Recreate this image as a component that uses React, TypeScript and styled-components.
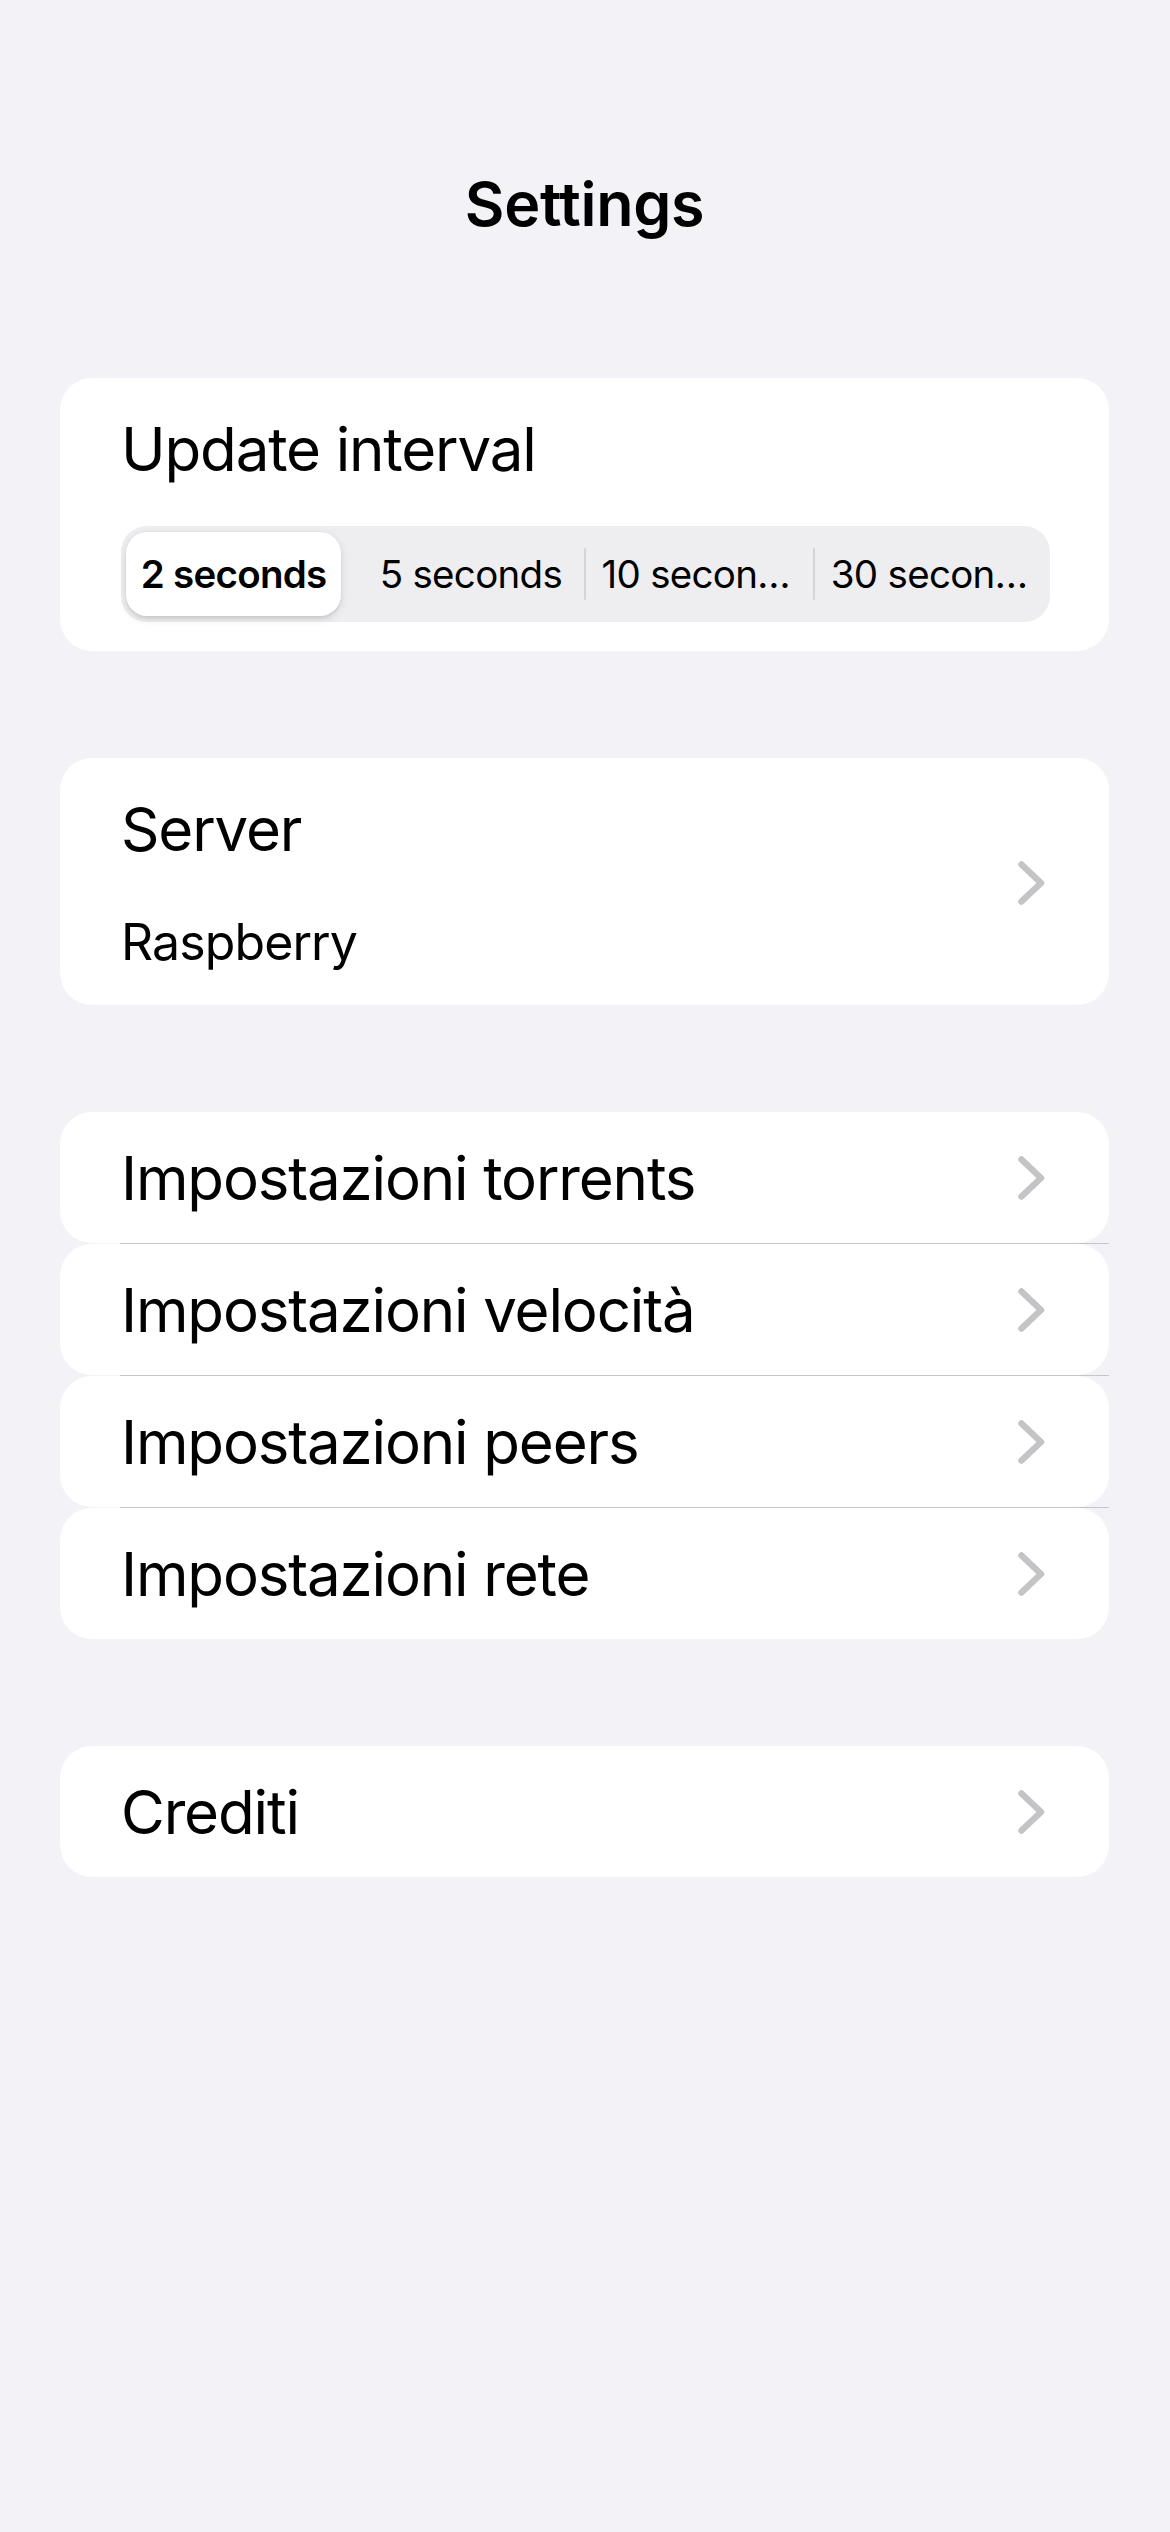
import React from "react";
import styled, { createGlobalStyle } from "styled-components";

const GlobalStyle = createGlobalStyle`
  html, body {
    margin: 0;
    padding: 0;
    background: #f2f2f7;
  }
  body {
    font-family: Inter, "Noto Sans", "Liberation Sans", sans-serif;
    color: #000;
    -webkit-font-smoothing: antialiased;
  }
  * { box-sizing: border-box; }
`;

const Page = styled.div`
  min-height: 2532px;
  background: #f2f2f7;
  padding: 167px 61px 0 60px;
  display: flex;
  flex-direction: column;
`;

const Title = styled.h1`
  margin: 0 0 137px;
  font-size: 61px;
  line-height: 74px;
  font-weight: 600;
  text-align: center;
  letter-spacing: -0.3px;
`;

const Sections = styled.div`
  display: flex;
  flex-direction: column;
  gap: 107px;
`;

const Card = styled.section`
  background: #fff;
  border-radius: 32px;
  padding: 35px 59px 29px 61px;
  display: flex;
  flex-direction: column;
`;

const Label = styled.div`
  font-size: 60px;
  line-height: 72px;
  font-weight: 400;
  letter-spacing: -1.15px;
`;

const Segmented = styled.div`
  margin-top: 41px;
  height: 96px;
  padding: 6px;
  border-radius: 26px;
  background: #eeeef0;
  display: grid;
  grid-template-columns: repeat(4, 1fr);
`;

const Segment = styled.div<{ $divider?: boolean }>`
  position: relative;
  display: flex;
  align-items: center;
  justify-content: center;
  min-width: 0;
  padding: 0 16px;
  font-size: 38.5px;
  font-weight: 400;
  letter-spacing: -0.7px;

  &::before {
    content: "";
    display: ${(p) => (p.$divider ? "block" : "none")};
    position: absolute;
    left: -2px;
    top: 16px;
    bottom: 16px;
    width: 2px;
    border-radius: 1px;
    background: #d4d4d6;
  }
`;

const SegmentText = styled.span`
  white-space: nowrap;
  overflow: hidden;
  text-overflow: ellipsis;
`;

const Thumb = styled.div`
  flex: 1;
  align-self: stretch;
  margin: 0 15px 0 -1px;
  border-radius: 21px;
  background: #fff;
  box-shadow: 0 3px 8px rgba(0, 0, 0, 0.12), 0 3px 1px rgba(0, 0, 0, 0.04),
    0 0 0 0.5px rgba(0, 0, 0, 0.04);
  display: flex;
  align-items: center;
  justify-content: center;
  font-weight: 600;
`;

const LinkCard = styled.section`
  background: #fff;
  border-radius: 32px;
  padding: 35px 64px 33px 61px;
  display: flex;
  align-items: center;
  justify-content: space-between;
`;

const Stack = styled.div`
  display: flex;
  flex-direction: column;
  gap: 47px;
`;

const Detail = styled.div`
  font-size: 50px;
  line-height: 60px;
  font-weight: 400;
  letter-spacing: -0.9px;
`;

const Group = styled.div`
  display: flex;
  flex-direction: column;
`;

const Row = styled.div`
  height: 131px;
  background: #fff;
  border-radius: 32px;
  padding: 0 64px 0 61px;
  display: flex;
  align-items: center;
  justify-content: space-between;
`;

const Separator = styled.div`
  height: 1px;
  margin-left: 60px;
  background: #c6c6c8;
`;

const ChevronSvg = styled.svg`
  flex: none;
  width: 27px;
  height: 44px;
  display: block;
`;

const Chevron = () => (
  <ChevronSvg viewBox="0 0 27 44">
    <path
      d="M3.5 3.5 L23 22 L3.5 40.5"
      fill="none"
      stroke="#c4c4c7"
      strokeWidth={6.5}
      strokeLinecap="round"
      strokeLinejoin="round"
    />
  </ChevronSvg>
);

const settingsRows = [
  "Impostazioni torrents",
  "Impostazioni velocità",
  "Impostazioni peers",
  "Impostazioni rete",
];

const intervals = ["2 seconds", "5 seconds", "10 seconds", "30 seconds"];

export default function App() {
  return (
    <>
      <GlobalStyle />
      <Page>
        <Title>Settings</Title>
        <Sections>
          <Card>
            <Label>Update interval</Label>
            <Segmented>
              {intervals.map((label, i) =>
                i === 0 ? (
                  <Segment key={label} style={{ padding: 0 }}>
                    <Thumb>
                      <SegmentText>{label}</SegmentText>
                    </Thumb>
                  </Segment>
                ) : (
                  <Segment key={label} $divider={i > 1}>
                    <SegmentText>{label}</SegmentText>
                  </Segment>
                )
              )}
            </Segmented>
          </Card>

          <LinkCard>
            <Stack>
              <Label>Server</Label>
              <Detail>Raspberry</Detail>
            </Stack>
            <Chevron />
          </LinkCard>

          <Group>
            {settingsRows.map((label, i) => (
              <React.Fragment key={label}>
                {i > 0 && <Separator />}
                <Row>
                  <Label>{label}</Label>
                  <Chevron />
                </Row>
              </React.Fragment>
            ))}
          </Group>

          <Group>
            <Row>
              <Label>Crediti</Label>
              <Chevron />
            </Row>
          </Group>
        </Sections>
      </Page>
    </>
  );
}
